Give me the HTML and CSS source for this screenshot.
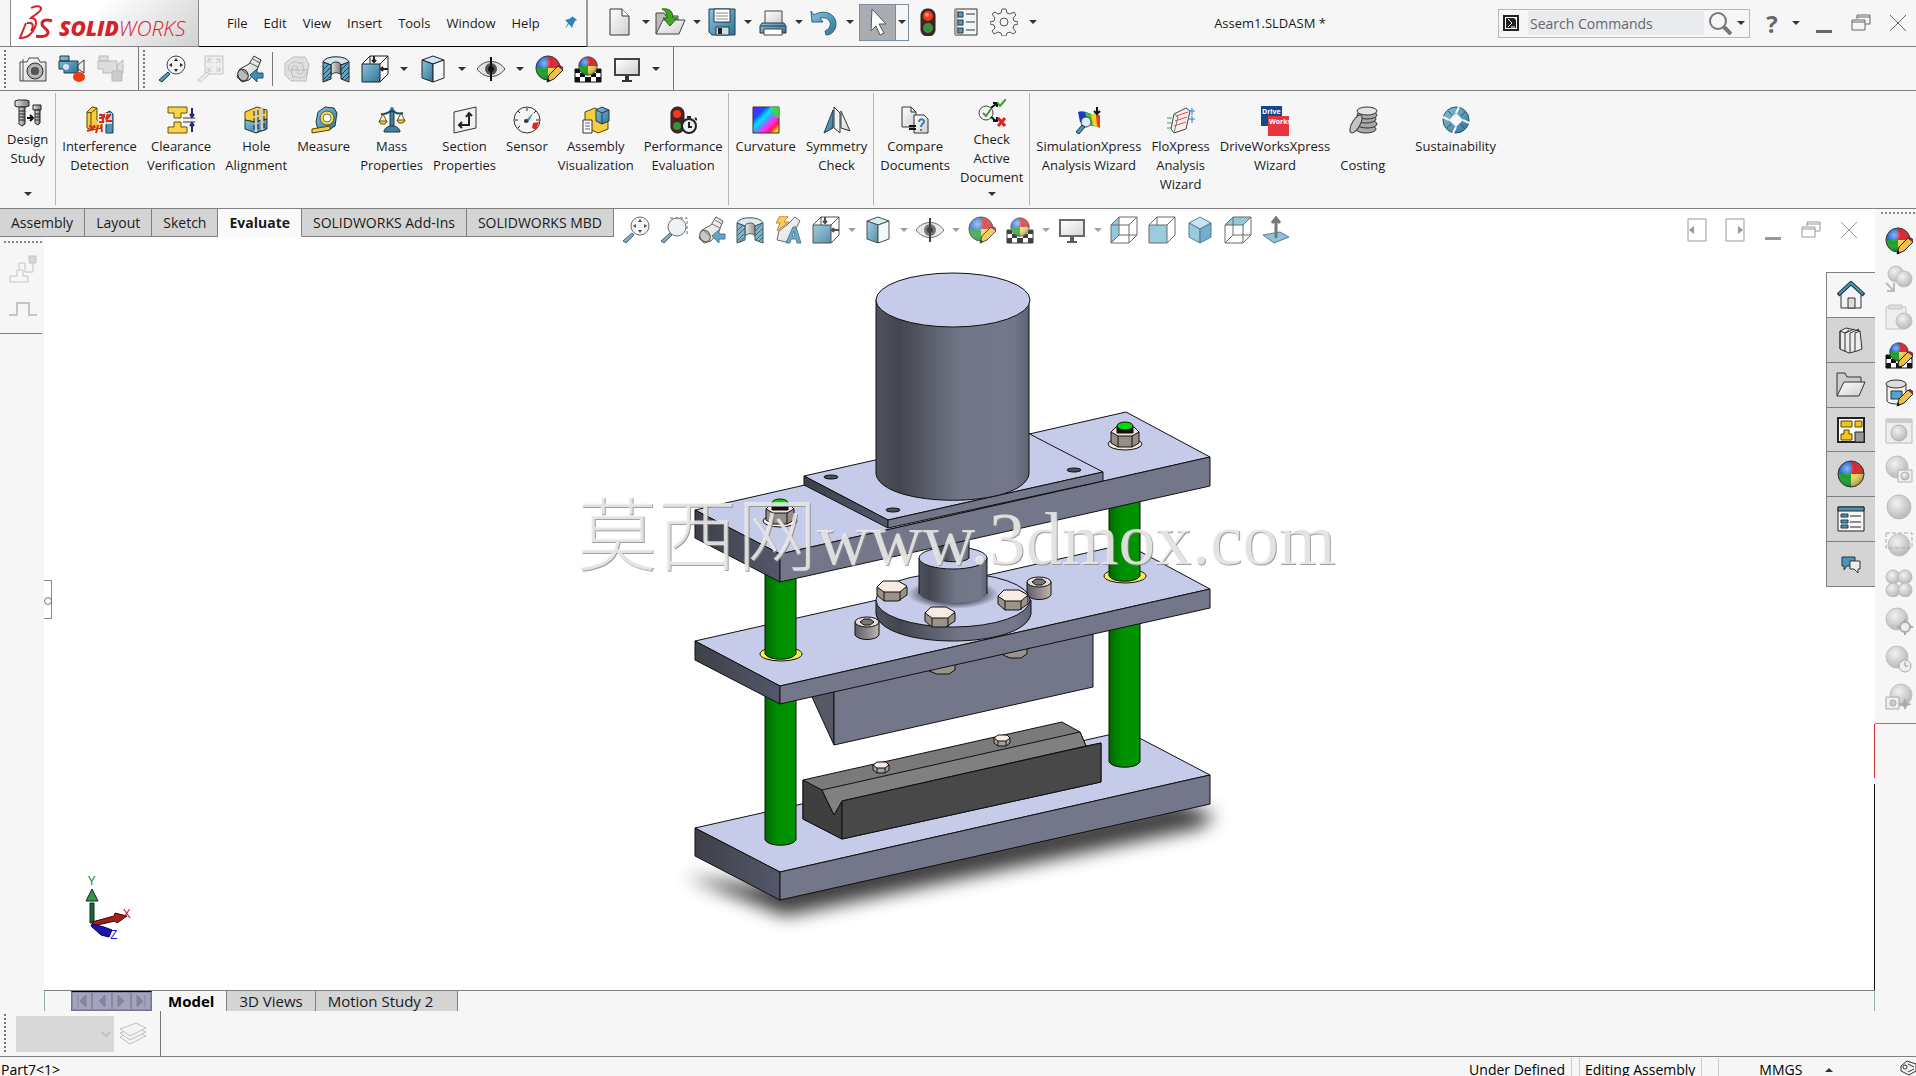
FILE: index.html
```html
<!DOCTYPE html>
<html lang="en">
<head>
    <meta charset="UTF-8">
    <meta name="viewport" content="width=device-width, initial-scale=1.0">
    <title>SOLIDWORKS - Assem1.SLDASM</title>
    <link rel="stylesheet" href="styles.css">
</head>
<body>
    <!-- icon sprite -->
    <svg class="sprite" aria-hidden="true">
        <defs>
            <linearGradient id="blue" x1="0" y1="0" x2="1" y2="1"><stop offset="0" stop-color="#8cc4dc"/><stop offset="1" stop-color="#2f7396"/></linearGradient>
            <linearGradient id="paper" x1="0" y1="0" x2="1" y2="1"><stop offset="0" stop-color="#fff"/><stop offset="1" stop-color="#cfcfcf"/></linearGradient>
            <linearGradient id="metal" x1="0" y1="0" x2="1" y2="0"><stop offset="0" stop-color="#e4e4e4"/><stop offset="1" stop-color="#777"/></linearGradient>
            <linearGradient id="rainbow" x1="0" y1="0" x2="1" y2="1"><stop offset="0" stop-color="#7a10ff"/><stop offset=".25" stop-color="#1550ff"/><stop offset=".4" stop-color="#00e5ff"/><stop offset=".5" stop-color="#40a0ff"/><stop offset=".65" stop-color="#ff30f0"/><stop offset=".8" stop-color="#ff1a50"/><stop offset=".92" stop-color="#ffe600"/><stop offset="1" stop-color="#40e000"/></linearGradient>
            <radialGradient id="shine" cx=".35" cy=".3" r=".75"><stop offset="0" stop-color="#fff" stop-opacity=".5"/><stop offset=".4" stop-color="#fff" stop-opacity="0"/><stop offset="1" stop-color="#000" stop-opacity=".35"/></radialGradient>
            <radialGradient id="grayball" cx=".4" cy=".35" r=".7"><stop offset="0" stop-color="#f2f2f2"/><stop offset="1" stop-color="#b4b4b4"/></radialGradient>
        </defs>

        <symbol id="new" viewBox="0 0 28 28"><path d="M4 1h12l7 7v19H4z" fill="url(#paper)" stroke="#333"/><path d="M16 1v7h7" fill="#fff" stroke="#333"/></symbol>
        <symbol id="open" viewBox="0 0 32 28"><path d="M1 26V5h8l2 3h12v4" fill="#bbb" stroke="#444"/><path d="M1 26l7-14h22l-6 14z" fill="url(#paper)" stroke="#444"/><path d="M7 1c7-1 11 2 11 9h4l-7 8-7-8h4c0-4-1-7-5-9z" fill="#45a520" stroke="#1f6310"/></symbol>
        <symbol id="save" viewBox="0 0 28 28"><path d="M1 1h26v26H4l-3-3z" fill="url(#blue)" stroke="#1d3a4a"/><path d="M6 1h16v13H6z" fill="#fff" stroke="#1d3a4a"/><path d="M8 5h12M8 8h12M8 11h12" stroke="#888"/><path d="M8 19h13v8H8z" fill="#cfdde4" stroke="#1d3a4a"/><path d="M10 20h4v6h-4z" fill="#222"/></symbol>
        <symbol id="print" viewBox="0 0 28 28"><path d="M6 3h17v13H6z" fill="url(#paper)" stroke="#444"/><path d="M3 15h22l2 3v7H1v-7z" fill="url(#blue)" stroke="#1d3a4a"/><path d="M5 21h18v6H5z" fill="#fff" stroke="#444"/><path d="M2 18h24" stroke="#1d3a4a"/></symbol>
        <symbol id="undo" viewBox="0 0 28 28"><path d="M1 3l3 4c9-6 22-2 22 9 0 6-4 11-10 11l-1-4c9-4 6-15-5-13l3 4H2z" fill="url(#blue)" stroke="#2b6384"/></symbol>
        <symbol id="cursor" viewBox="0 0 28 28"><path d="M8 1l14 15h-7l5 9-4 2-4-9-5 5z" fill="#fff" stroke="#555"/></symbol>
        <symbol id="traffic" viewBox="0 0 28 28"><rect x="7" y="1" width="14" height="27" rx="6" fill="#4a2222" stroke="#222"/><circle cx="14" cy="8" r="5" fill="#f23b1d"/><circle cx="14" cy="20" r="5" fill="#35933f"/><circle cx="13" cy="7" r="2" fill="#ff9577"/></symbol>
        <symbol id="list" viewBox="0 0 28 28"><path d="M3 1h22v26H3z" fill="#f4f7f8" stroke="#333"/><path d="M3 1h3v26H3z" fill="#aaa"/><path d="M6 4h5v5H6zM6 12h5v5H6zM6 20h5v5H6z" fill="#5a9cbd" stroke="#234"/><path d="M14 6h9M14 14h9M14 22h9" stroke="#333"/></symbol>
        <symbol id="gear" viewBox="0 0 28 28"><path d="M12 1h4l1 4 3 1 4-2 2 3-3 3 1 3 4 1v2l-4 1-1 3 3 4-3 2-3-2-3 1-1 3h-4l-1-3-3-1-4 2-2-3 3-3-1-3-4-1v-2l4-1 1-3-3-4 3-2 3 2 3-1z" fill="#f4f4f4" stroke="#555"/><circle cx="14" cy="14" r="4" fill="#f7f7f7" stroke="#555"/></symbol>
        <symbol id="camera" viewBox="0 0 28 28"><path d="M1 7h7l2-4h9l2 4h6v19H1z" fill="url(#paper)" stroke="#444"/><path d="M4 4v22" stroke="#555"/><circle cx="16" cy="16" r="8" fill="#aaa" stroke="#333"/><circle cx="16" cy="16" r="5" fill="#555" stroke="#ddd"/></symbol>
        <symbol id="video" viewBox="0 0 28 28"><path d="M2 1h9v5H2zM1 6h19v12H6v-4H1z" fill="url(#blue)" stroke="#1d3a4a"/><circle cx="8" cy="12" r="3" fill="#cfe6f0"/><path d="M20 10l6-5v13l-6-4z" fill="#eee" stroke="#333"/><ellipse cx="21" cy="22" rx="6" ry="5" fill="#ee3c10"/></symbol>
        <symbol id="videostop" viewBox="0 0 28 28"><g fill="#ddd" stroke="#bbb"><path d="M2 1h9v5H2zM1 6h19v12H6v-4H1zM20 10l6-5v13l-6-4z"/><path d="M15 16h10v10H15z" fill="#ccc"/></g></symbol>
        <symbol id="zoomfit" viewBox="0 0 28 28"><path d="M10 17l2 2-8 8-3-2z" fill="url(#blue)" stroke="#234"/><circle cx="18" cy="10" r="9" fill="#f2f6f8" stroke="#444"/><path d="M18 3l2 3h-4zM18 17l2-3h-4zM11 10l3-2v4zM25 10l-3-2v4z" fill="#222"/></symbol>
        <symbol id="zoomarea" viewBox="0 0 28 28"><g fill="#eee" stroke="#c4c4c4"><path d="M8 1h18v18H8z"/><path d="M10 17l2 2-8 8-3-2z"/><path d="M11 8V4h4M19 4h4v4M23 12v4h-4M15 16h-4v-4M11 4l4 4M23 4l-4 4M23 16l-4-4M11 16l4-4" fill="none"/></g></symbol>
        <symbol id="zoomwin" viewBox="0 0 28 28"><path d="M10 2h17v16" fill="none" stroke="#444" stroke-dasharray="3 2"/><path d="M10 17l2 2-8 8-3-2z" fill="url(#blue)" stroke="#234"/><circle cx="17" cy="11" r="9" fill="#e9f0f2" stroke="#444"/></symbol>
        <symbol id="prev" viewBox="0 0 28 28"><path d="M18 1l7 4-4 10-8 10-7 2-5-5 3-8 9-5z" fill="url(#paper)" stroke="#333"/><ellipse cx="7" cy="20" rx="5" ry="6" fill="#bbb" stroke="#333" transform="rotate(-30 7 20)"/><path d="M14 8l8 4M17 4l7 4M6 15l6 5" stroke="#555"/><path d="M14 20l7-6v4h6v5h-6v4z" fill="#3f8fb8" stroke="#1d5270"/></symbol>
        <symbol id="refresh" viewBox="0 0 28 28"><g fill="#e0e0e0" stroke="#bdbdbd"><path d="M2 8l8-6h12l4 7-3 17H8L2 20z"/><path d="M5 15c0-8 8-10 12-6l2-2 2 8h-8l2-3c-4-3-6 0-6 3zM24 15c0 8-8 10-12 6l-2 2-2-8h8l-2 3c4 3 6 0 6-3z"/></g></symbol>
        <symbol id="section" viewBox="0 0 28 28"><path d="M1 7C3 0 25 0 27 7l-8 3c-1-3-9-3-10 0z" fill="#d5e5ec" stroke="#222"/><path d="M9 10c1-4 9-4 10 0v10c-2-3-8-3-10 0z" fill="url(#metal)" stroke="#333"/><path d="M1 7l8 3v14l-8 3zM27 7l-8 3v14l8 3z" fill="#5fa5c6" stroke="#222"/><path d="M1 15l6-6M1 20l8-8M1 25l8-8M3 26l6-5M19 15l6-6M19 20l8-8M20 24l7-7M23 25l4-4" stroke="#153d52"/></symbol>
        <symbol id="viewcube" viewBox="0 0 28 28"><path d="M9 1h18v18M9 1L1 9M27 1l-8 8M27 19l-8 8M9 1v8" fill="none" stroke="#222"/><path d="M1 9h18v18H1z" fill="url(#blue)" stroke="#222"/><path d="M13 1v6M11 5l2 2 2-2M27 14h-7M22 12l-2 2 2 2" fill="none" stroke="#222" stroke-width="2"/></symbol>
        <symbol id="cube" viewBox="0 0 28 28"><path d="M3 5l11-4 11 4-11 4z" fill="#cfe8f2" stroke="#222"/><path d="M3 5l11 4v18L3 23z" fill="url(#blue)" stroke="#222"/><path d="M25 5L14 9v18l11-4z" fill="#f1f7fa" stroke="#222"/></symbol>
        <symbol id="eye" viewBox="0 0 28 28"><path d="M0 14C7 4 21 4 28 14 21 24 7 24 0 14z" fill="#e4e4e4" stroke="#444"/><circle cx="14" cy="14" r="6" fill="#555"/><path d="M14 2v24" stroke="#111" stroke-width="2"/><circle cx="14" cy="14" r="3" fill="#111"/></symbol>
        <symbol id="ball" viewBox="0 0 28 28"><path d="M14 1v13H1A13 13 0 0 1 14 1z" fill="#2568d8"/><path d="M14 1a13 13 0 0 1 13 13H14z" fill="#d8232a"/><path d="M1 14h13v13A13 13 0 0 1 1 14z" fill="#17a024"/><path d="M27 14H14v13a13 13 0 0 0 13-13z" fill="#f0d25a"/><circle cx="14" cy="14" r="13" fill="url(#shine)" stroke="#333" stroke-width="1"/></symbol>
        <symbol id="pencil" viewBox="0 0 28 28"><path d="M12 27l2-7 9-9 5 4-9 9z" fill="#f0c040" stroke="#222"/><path d="M23 11l2-1 3 2v3z" fill="#8a2040"/><path d="M12 27l1-4 2 3z" fill="#111"/></symbol>
        <symbol id="ballpen" viewBox="0 0 28 28"><use href="#ball" width="26" height="26"/><use href="#pencil"/></symbol>
        <symbol id="scene" viewBox="0 0 28 28"><path d="M1 14h26v13H1z" fill="#fff" stroke="#111"/><path d="M1 14h5v4H1zM11 14h6v4h-6zM22 14h5v4h-5zM6 18h5v4H6zM17 18h5v4h-5zM1 22h5v5H1zM11 22h6v5h-6zM22 22h5v5h-5z" fill="#111"/><use href="#ball" x="4" y="0" width="20" height="22"/></symbol>
        <symbol id="scenepen" viewBox="0 0 28 28"><use href="#scene"/><use href="#pencil"/></symbol>
        <symbol id="monitor" viewBox="0 0 28 28"><path d="M1 3h26v18H1z" fill="#444"/><path d="M3 5h22v14H3z" fill="url(#paper)"/><path d="M12 21h4v4h-4zM9 25h10v2H9z" fill="#333"/></symbol>
        <symbol id="annot" viewBox="0 0 28 28"><path d="M21 1l5 4-5 9-9 12-9-2 2-9 8-6z" fill="url(#paper)" stroke="#444"/><path d="M6 0h8l-4 6h5L3 15l3-8H2z" fill="#f5c52c" stroke="#a56c10"/><path d="M12 27l7-16h3l5 16h-4l-1-4h-5l-1 4zM18 20h3l-1-5z" fill="#4d93b8" stroke="#285f80"/></symbol>
        <symbol id="wirebox" viewBox="0 0 28 28"><path d="M1 9h18v18H1zM9 1h18v18H9zM1 9l8-8M19 9l8-8M19 27l8-8M1 27l8-8" fill="none" stroke="#444"/></symbol>
        <symbol id="leftcube" viewBox="0 0 28 28"><path d="M1 9l8-8v18l-8 8z" fill="#7cb9d4"/><use href="#wirebox"/></symbol>
        <symbol id="frontcube" viewBox="0 0 28 28"><path d="M9 1h18v18l-8 8M1 9l8-8M19 9l8-8M9 1v8" fill="none" stroke="#444"/><path d="M1 9h18v18H1z" fill="#83bfd8" stroke="#444"/></symbol>
        <symbol id="topcube" viewBox="0 0 28 28"><path d="M1 9l8-8h18l-8 8z" fill="#7cb9d4"/><use href="#wirebox"/></symbol>
        <symbol id="solidcube" viewBox="0 0 28 28"><path d="M3 7l11-6 11 6-11 6z" fill="#b5e0f0" stroke="#357"/><path d="M3 7l11 6v14L3 21z" fill="#7fbfdc" stroke="#357"/><path d="M25 7l-11 6v14l11-6z" fill="#4f9dc2" stroke="#357"/></symbol>
        <symbol id="normal" viewBox="0 0 28 28"><path d="M1 19l17-3 9 5-15 6z" fill="#74b2d0" stroke="#357"/><path d="M14 22V4M10 7l4-5 4 5" fill="none" stroke="#555" stroke-width="3"/></symbol>

        <symbol id="design" viewBox="0 0 28 28"><g fill="url(#metal)" stroke="#222"><path d="M1 2l3-1h8l3 1v5l-3 1H4L1 7z"/><path d="M5 8h6v17l-3 2-3-2z"/><path d="M19 6h8v5h-8z"/><path d="M21 11h5v13l-2 2-3-2z"/></g><path d="M5 12h6M5 15h6M5 18h6M5 21h6M21 15h5M21 18h5M21 21h5" stroke="#222"/><path d="M13 19h5M16 16l3 3-3 3" fill="none" stroke="#111" stroke-width="2"/></symbol>
        <symbol id="interf" viewBox="0 0 28 28"><path d="M1 6l5-5 5 1v12l5 3v5L6 24l-5-2z" fill="#f7cf3e" stroke="#5a4200"/><path d="M1 6l4 1v16M5 7l6-5" fill="none" stroke="#5a4200"/><path d="M18 8l6-3 3 3v19h-7V16h-4v-5z" fill="#4e94b6" stroke="#1d3a4a"/><path d="M12 7h14v11H12z" fill="#fff" fill-opacity=".7"/><path d="M13 9h5v3M13 12h4v4h-4M20 15h6M22 8l-2 5M25 8l-5 6M14 8l3 3M3 20l5 2M12 19l-2 8M15 19l1 7M1 25l7-2M8 19l1 3" fill="none" stroke="#e02820" stroke-width="2"/></symbol>
        <symbol id="clear" viewBox="0 0 28 28"><path d="M1 1h19v6h-6v5H7V7H1zM7 16h7v5h6v6H1v-6h6z" fill="#f6d54a" stroke="#6e5300"/><path d="M16 12h12M16 16h12" stroke="#333"/><path d="M25 2v9M23 8l2 3 2-3M25 26v-9M23 20l2-3 2 3" fill="none" stroke="#222870" stroke-width="2"/></symbol>
        <symbol id="hole" viewBox="0 0 28 28"><path d="M3 6l12-5 10 3v9L13 16 3 14z" fill="#f7cf3e" stroke="#5a4200"/><path d="M3 14l10 2 12-3v10l-11 4-11-4z" fill="url(#blue)" stroke="#1d3a4a"/><path d="M14 4v22M20 2v22" stroke="#ccc" stroke-width="3"/><path d="M12 5v21M22 3v22M16 4v22" stroke="#222" stroke-dasharray="5 2"/></symbol>
        <symbol id="measure" viewBox="0 0 28 28"><path d="M8 6l7-5 9 1 3 5-2 13-6 4H8L6 16z" fill="url(#blue)" stroke="#1d3a4a"/><circle cx="17" cy="12" r="7" fill="#f7d94e" stroke="#554"/><circle cx="17" cy="12" r="4" fill="#fff" stroke="#776"/><path d="M20 20L2 23v4l18-3z" fill="#f6cf3c" stroke="#5a4200"/></symbol>
        <symbol id="mass" viewBox="0 0 28 28"><path d="M12 4h4v16h-4z" fill="#3f7f9f" stroke="#1d3a4a"/><circle cx="14" cy="3" r="2" fill="#3f7f9f"/><path d="M3 8c7 1 8-3 11-3s4 4 11 2" fill="none" stroke="#1d4a64" stroke-width="2"/><path d="M5 8L1 16h8zM23 7l-4 8h8z" fill="none" stroke="#6a5200"/><path d="M1 15h8l-2 3H3zM19 14h8l-2 3h-4z" fill="#f6cf3c" stroke="#6a5200"/><path d="M6 26c0-4 4-6 8-6s8 2 8 6z" fill="#3f7f9f" stroke="#1d3a4a"/></symbol>
        <symbol id="sectprop" viewBox="0 0 28 28"><path d="M3 6l22-5v21L3 27z" fill="#f2f2f2" stroke="#333"/><path d="M9 19h9V9M11 16l-3 3 3 3M15 11l3-4 3 3" fill="none" stroke="#222" stroke-width="2"/></symbol>
        <symbol id="sensor" viewBox="0 0 28 28"><circle cx="14" cy="14" r="13" fill="#f5f5f5" stroke="#333"/><path d="M14 2v3M2 14h3M5 5l2 2M23 5l-2 2M5 22l2-2M26 14h-3" stroke="#222"/><path d="M12 15l9-9-6 11z" fill="#4e94b6"/><circle cx="13" cy="15" r="2" fill="#333"/><path d="M20 17l6-1-3 8-4-2z" fill="#e02820"/></symbol>
        <symbol id="asmviz" viewBox="0 0 28 28"><path d="M3 6l10-4 4 2v10l9 2v7l-10 4-13-6z" fill="#f6cf3c" stroke="#5a4200"/><path d="M14 4l6-3 7 3v11l-7 3-6-3z" fill="url(#blue)" stroke="#1d3a4a"/><path d="M14 4l6 3 7-3M20 7v11" fill="none" stroke="#1d3a4a"/><path d="M1 14h9v13H1z" fill="#fff" stroke="#333"/><path d="M3 17h5M3 20h5M3 23h5" stroke="#2a6bb0"/></symbol>
        <symbol id="perf" viewBox="0 0 28 28"><rect x="2" y="1" width="13" height="26" rx="6" fill="#4a2222" stroke="#222"/><circle cx="8" cy="8" r="4" fill="#f23b1d"/><circle cx="8" cy="20" r="4" fill="#35933f"/><circle cx="20" cy="20" r="7" fill="#e5f0f5" stroke="#222" stroke-width="2"/><path d="M18 11h4M20 16v5h3M26 12l2 2" fill="none" stroke="#222" stroke-width="2"/></symbol>
        <symbol id="curv" viewBox="0 0 28 28"><path d="M1 1h26v26H1z" fill="url(#rainbow)" stroke="#333"/><path d="M17 1h10v11c-5 0-6-6-10-11z" fill="#38e030" opacity=".8"/></symbol>
        <symbol id="symm" viewBox="0 0 28 28"><path d="M10 4v18L1 27z" fill="url(#blue)" stroke="#1d3a4a"/><path d="M18 5v17l9 3z" fill="url(#paper)" stroke="#333"/><path d="M11 1l6 6v20l-6-5z" fill="#eee" fill-opacity=".7" stroke="#333"/></symbol>
        <symbol id="compare" viewBox="0 0 28 28"><path d="M1 1h9l5 5v15H1z" fill="url(#paper)" stroke="#333"/><path d="M10 1v5h5" fill="none" stroke="#333"/><path d="M13 9h10l4 4v14H13z" fill="url(#paper)" stroke="#333"/><path d="M8 20h7M8 23h7" stroke="#111" stroke-width="2"/><path d="M18 16c0-4 6-3 5 0-1 2-3 2-3 5M20 23v2" fill="none" stroke="#3781a8" stroke-width="2"/></symbol>
        <symbol id="check" viewBox="0 0 28 28"><circle cx="8" cy="14" r="7" fill="#f4f4f4" stroke="#444"/><path d="M5 14l3 3 5-7" fill="none" stroke="#3c9a2c" stroke-width="2"/><path d="M13 9l5-4M15 4l4 0v4M13 18l5 4M19 18v4h-4" fill="none" stroke="#111" stroke-width="2"/><path d="M19 3l3 4 6-7" fill="none" stroke="#3c9a2c" stroke-width="2"/><path d="M20 19l7 8M27 19l-7 8" stroke="#d22" stroke-width="3"/></symbol>
        <symbol id="sim" viewBox="0 0 28 28"><path d="M3 6c7-3 12 4 22 3v13c-6-3-12-2-20-6z" fill="#1c38c8"/><path d="M10 6c4 1 8 3 15 3v13c-4-2-8-3-12-3z" fill="#3fc23a"/><path d="M16 8l9 1v13l-7-3z" fill="#f6d61c"/><path d="M21 9h4v13l-3-2z" fill="#ee3a1c"/><circle cx="11" cy="16" r="5" fill="#d9edf3" stroke="#444"/><path d="M7 19l3 2-6 7-3-2z" fill="#4e94b6" stroke="#234"/><path d="M22 1v7M19 5l3 3 3-3" fill="none" stroke="#111" stroke-width="2"/></symbol>
        <symbol id="flo" viewBox="0 0 28 28"><path d="M7 8l12-6 4 3-4 18-12 4-3-4z" fill="#fbeeee" stroke="#444"/><path d="M9 10l12-4M8 15l12-4M7 20l12-4" stroke="#e05050"/><path d="M7 8l4 3-4 16M0 12h5M0 17h5M0 22h5" fill="none" stroke="#3fa05c"/><path d="M25 2v7M25 10v7M22 5h6M22 13h6" stroke="#2a80d0"/></symbol>
        <symbol id="cost" viewBox="0 0 30 28"><g fill="#a8a8a8" stroke="#333"><ellipse cx="18" cy="23" rx="10" ry="4"/><ellipse cx="19" cy="18" rx="10" ry="4"/><ellipse cx="18" cy="13" rx="10" ry="4"/><ellipse cx="19" cy="9" rx="10" ry="4"/><ellipse cx="19" cy="5" rx="10" ry="4" fill="#e4e4e4"/><ellipse cx="8" cy="18" rx="4" ry="10" transform="rotate(30 8 18)" fill="#c4c4c4"/></g></symbol>
        <symbol id="sustain" viewBox="0 0 28 28"><circle cx="14" cy="14" r="13" fill="url(#blue)" stroke="#234f68"/><path d="M14 7l7 7-7 7-7-7z" fill="#f7f7f7"/><path d="M14 7l3-6M21 14l6 3M14 21l-3 6M7 14l-6-3" stroke="#f7f7f7" stroke-width="2"/><path d="M10 9L6 5M19 10l4-4M19 18l3 4M9 18l-4 4" stroke="#1f5c7c"/></symbol>

        <symbol id="home" viewBox="0 0 28 28"><path d="M4 13v14h20V13L14 4z" fill="#f3f3f3" stroke="#333"/><path d="M11 17h7v10h-7z" fill="#ddd" stroke="#333"/><path d="M1 14L14 2l13 12" fill="none" stroke="#1d3a4a" stroke-width="4"/><path d="M2 13L14 2l12 11" fill="none" stroke="#4e94b6" stroke-width="2"/></symbol>
        <symbol id="books" viewBox="0 0 28 28"><g fill="#ececec" stroke="#333"><path d="M3 5l6-3 14 3 2 18-5 2-8 2-9-4z"/><path d="M3 5l5 2 4-3M8 7v19M8 7l5-2 4-2M13 7v20M13 7l5-2 4-2M18 7v18M18 7l5-2M3 5v18" fill="none"/></g></symbol>
        <symbol id="folder" viewBox="0 0 32 28"><path d="M2 25V2h8l2 4h14v5" fill="#ccc" stroke="#333"/><path d="M2 25l7-14h21l-6 14z" fill="url(#paper)" stroke="#333"/></symbol>
        <symbol id="palette" viewBox="0 0 28 28"><path d="M1 2h26v24H1z" fill="#fff" stroke="#222" stroke-width="2"/><path d="M4 5h11v6H4zM18 5h7v6h-7zM7 14h5v4h3v6H4v-6h3z" fill="#f4c41e" stroke="#5a4200"/><path d="M18 16h9v10h-9z" fill="#999" stroke="#222"/></symbol>
        <symbol id="props" viewBox="0 0 28 28"><path d="M1 2h26v24H1z" fill="#f8f8f8" stroke="#222"/><path d="M1 2h26v4H1z" fill="#4e94b6" stroke="#222"/><path d="M4 9h7v3H4zM4 15h7v3H4zM4 20h7v3H4z" fill="#4e94b6" stroke="#1d3a4a"/><path d="M13 11h11M13 17h11M13 22h11" stroke="#222"/></symbol>
        <symbol id="chat" viewBox="0 0 28 28"><path d="M5 7h13v9h-8l-3 4v-4H5z" fill="#4e94b6" stroke="#1d3a4a"/><path d="M13 11h10v8h-2v4l-4-4h-4z" fill="#eee" stroke="#333"/></symbol>
        <symbol id="db" viewBox="0 0 28 28"><path d="M2 5v17c2 4 17 4 19 0V5" fill="#f3f3f3" stroke="#333"/><ellipse cx="11" cy="5" rx="10" ry="4" fill="#ddd" stroke="#333"/><path d="M6 12h11v8H6z" fill="#4ea4d4" stroke="#333"/><use href="#pencil"/></symbol>

        <symbol id="g-copy" viewBox="0 0 28 28"><g fill="url(#grayball)" stroke="#c2c2c2"><circle cx="11" cy="9" r="8"/><circle cx="19" cy="14" r="8"/></g><path d="M1 18l7 7M9 18v8H2" fill="none" stroke="#bbb" stroke-width="2"/></symbol>
        <symbol id="g-paste" viewBox="0 0 28 28"><path d="M1 4h20v22H1z" fill="#eee" stroke="#c4c4c4"/><path d="M4 2h13v4H4z" fill="#ddd" stroke="#c4c4c4"/><circle cx="19" cy="18" r="8" fill="url(#grayball)" stroke="#c2c2c2"/></symbol>
        <symbol id="g-win" viewBox="0 0 28 28"><path d="M1 2h26v24H1z" fill="#eee" stroke="#bbb"/><path d="M1 2h26v4H1z" fill="#ccc"/><circle cx="14" cy="16" r="8" fill="url(#grayball)" stroke="#b5b5b5"/></symbol>
        <symbol id="g-ballwin" viewBox="0 0 28 28"><circle cx="12" cy="12" r="11" fill="url(#grayball)" stroke="#c2c2c2"/><path d="M13 15h14v12H13z" fill="#eee" stroke="#b5b5b5"/><circle cx="20" cy="21" r="4" fill="url(#grayball)" stroke="#b5b5b5"/></symbol>
        <symbol id="g-ball" viewBox="0 0 28 28"><circle cx="14" cy="14" r="12" fill="url(#grayball)" stroke="#bbb"/></symbol>
        <symbol id="g-region" viewBox="0 0 28 28"><circle cx="14" cy="14" r="11" fill="url(#grayball)" stroke="#c2c2c2"/><path d="M1 2h26v15H1z" fill="none" stroke="#aaa" stroke-dasharray="4 2"/></symbol>
        <symbol id="g-four" viewBox="0 0 28 28"><g fill="url(#grayball)" stroke="#bbb"><circle cx="8" cy="8" r="7"/><circle cx="20" cy="8" r="7"/><circle cx="8" cy="21" r="7"/><circle cx="20" cy="21" r="7"/></g></symbol>
        <symbol id="g-gear" viewBox="0 0 28 28"><circle cx="12" cy="12" r="11" fill="url(#grayball)" stroke="#c2c2c2"/><circle cx="20" cy="20" r="5" fill="#eee" stroke="#aaa" stroke-width="2"/><path d="M20 12v3M20 25v3M12 20h3M25 20h3" stroke="#aaa" stroke-width="2"/></symbol>
        <symbol id="g-clock" viewBox="0 0 28 28"><circle cx="12" cy="12" r="11" fill="url(#grayball)" stroke="#c2c2c2"/><circle cx="20" cy="21" r="6" fill="#eee" stroke="#aaa"/><path d="M20 17v4h3" fill="none" stroke="#999"/></symbol>
        <symbol id="g-star" viewBox="0 0 28 28"><circle cx="16" cy="12" r="11" fill="url(#grayball)" stroke="#c2c2c2"/><path d="M1 14h13v12H1z" fill="#eee" stroke="#aaa"/><circle cx="8" cy="20" r="3" fill="#ccc" stroke="#aaa"/><path d="M20 15l2 5 5 1-5 2-2 4-2-4-4-2 4-1z" fill="#aaa"/></symbol>
        <symbol id="g-steps" viewBox="0 0 28 28"><path d="M1 27h18v-6h-5v-6H8v6H1zM10 14V8h6v9h8V8" fill="none" stroke="#c4c4c4"/><path d="M20 1h7v7h-7z" fill="#d6d6d6" stroke="#c4c4c4"/></symbol>
        <symbol id="g-pulse" viewBox="0 0 28 28"><path d="M0 20h8V8h12v12h8" fill="none" stroke="#c4c4c4" stroke-width="2"/></symbol>
        <symbol id="g-layers" viewBox="0 0 28 28"><g fill="#f2f2f2" stroke="#c2c2c2"><path d="M1 17l16-6 10 5-16 8z"/><path d="M1 13l16-6 10 5-16 8z"/><path d="M1 9l16-6 10 5-16 8z"/></g></symbol>

        <symbol id="w-min" viewBox="0 0 20 20"><path d="M2 17h16v3H2z" fill="currentColor"/></symbol>
        <symbol id="w-restore" viewBox="0 0 20 20"><path d="M6 6V2h13v9h-5M1 7h13v10H1zM1 9h13M6 4h13" fill="none" stroke="currentColor"/></symbol>
        <symbol id="w-close" viewBox="0 0 20 20"><path d="M2 2l16 16M18 2L2 18" stroke="currentColor" fill="none"/></symbol>
        <symbol id="w-left" viewBox="0 0 20 24"><path d="M1 1h18v22H1z" fill="none" stroke="currentColor"/><path d="M7 8v8l-5-4z" fill="currentColor"/></symbol>
        <symbol id="w-right" viewBox="0 0 20 24"><path d="M1 1h18v22H1z" fill="none" stroke="currentColor"/><path d="M13 8v8l5-4z" fill="currentColor"/></symbol>
    </svg>

    <header class="titlebar">
        <div class="logo">
            <svg class="logo-mark" viewBox="0 0 36 36" aria-hidden="true"><path d="M13 3c5-3 11-2 10 1-1 4-7 6-10 9 5 0 6 4 4 9-2 6-8 12-15 11l6-15M9 18h3c4 0 3 5 1 8" fill="none" stroke="#d2232a" stroke-width="2"/><path d="M34 16c-5-2-10-1-10 3s7 5 6 9-8 4-12 3" fill="none" stroke="#d2232a" stroke-width="3"/></svg>
            <span class="logo-text"><b>SOLID</b>WORKS</span>
        </div>
        <nav class="menu">
            <button>File</button>
            <button>Edit</button>
            <button>View</button>
            <button>Insert</button>
            <button>Tools</button>
            <button>Window</button>
            <button>Help</button>
            <button class="pin" aria-label="Pin menu"><svg viewBox="0 0 14 16"><path d="M8 1l5 4-2 1-2 4-1 3-3-4-4 5 3-6-3-3 4-1 3-2z" fill="#2e83b5"/></svg></button>
        </nav>
        <div class="tools quick">
            <button class="tool" aria-label="New"><svg class="icon"><use href="#new"/></svg></button><button class="caret" aria-label="New options"></button>
            <button class="tool" aria-label="Open"><svg class="icon wide"><use href="#open"/></svg></button><button class="caret" aria-label="Open options"></button>
            <button class="tool" aria-label="Save"><svg class="icon"><use href="#save"/></svg></button><button class="caret" aria-label="Save options"></button>
            <button class="tool" aria-label="Print"><svg class="icon"><use href="#print"/></svg></button><button class="caret" aria-label="Print options"></button>
            <button class="tool" aria-label="Undo"><svg class="icon"><use href="#undo"/></svg></button><button class="caret" aria-label="Undo options"></button>
            <span class="select-box">
                <button class="tool" aria-label="Select"><svg class="icon"><use href="#cursor"/></svg></button><button class="caret" aria-label="Select options"></button>
            </span>
            <button class="tool big" aria-label="Rebuild"><svg class="icon"><use href="#traffic"/></svg></button>
            <button class="tool big" aria-label="File properties"><svg class="icon"><use href="#list"/></svg></button>
            <button class="tool big" aria-label="Options"><svg class="icon"><use href="#gear"/></svg></button><button class="caret" aria-label="More options"></button>
        </div>
        <h1 class="doc-title">Assem1.SLDASM *</h1>
        <form class="search">
            <svg class="search-type" viewBox="0 0 16 16" aria-hidden="true"><path d="M1 1h14v14H1z" fill="#fff" stroke="#222" stroke-width="2"/><path d="M3 3h8l2 2v8H3z" fill="#222"/><path d="M5 4l4 4-4 4M8 12h4" fill="none" stroke="#fff"/></svg>
            <input type="text" placeholder="Search Commands" aria-label="Search Commands">
            <button type="button" class="search-go" aria-label="Search"><svg viewBox="0 0 24 24"><circle cx="10" cy="10" r="8" fill="none" stroke="#777" stroke-width="2"/><path d="M16 16l7 7" stroke="#777" stroke-width="4"/></svg></button>
            <button type="button" class="caret" aria-label="Search options"></button>
        </form>
        <button class="help">?</button>
        <button class="caret" aria-label="Help options"></button>
        <div class="window-buttons">
            <button aria-label="Minimize"><svg><use href="#w-min"/></svg></button>
            <button aria-label="Restore"><svg><use href="#w-restore"/></svg></button>
            <button aria-label="Close"><svg><use href="#w-close"/></svg></button>
        </div>
    </header>

    <div class="toolbar">
        <div class="tools group">
            <span class="grip"></span>
            <button class="tool" aria-label="Screen capture"><svg class="icon"><use href="#camera"/></svg></button>
            <button class="tool" aria-label="Record video"><svg class="icon"><use href="#video"/></svg></button>
            <button class="tool" aria-label="Stop video" disabled><svg class="icon"><use href="#videostop"/></svg></button>
        </div>
        <div class="tools group">
            <span class="grip"></span>
            <button class="tool" aria-label="Zoom to fit"><svg class="icon"><use href="#zoomfit"/></svg></button>
            <button class="tool" aria-label="Zoom to area" disabled><svg class="icon"><use href="#zoomarea"/></svg></button>
            <button class="tool" aria-label="Previous view"><svg class="icon"><use href="#prev"/></svg></button>
            <span class="divider"></span>
            <button class="tool" aria-label="Redraw" disabled><svg class="icon"><use href="#refresh"/></svg></button>
            <button class="tool" aria-label="Section view"><svg class="icon"><use href="#section"/></svg></button>
            <button class="tool" aria-label="View orientation"><svg class="icon"><use href="#viewcube"/></svg></button><button class="caret" aria-label="Orientation options"></button>
            <button class="tool" aria-label="Display style"><svg class="icon"><use href="#cube"/></svg></button><button class="caret" aria-label="Display options"></button>
            <button class="tool" aria-label="Hide items"><svg class="icon"><use href="#eye"/></svg></button><button class="caret" aria-label="Hide options"></button>
            <button class="tool" aria-label="Edit appearance"><svg class="icon"><use href="#ballpen"/></svg></button>
            <button class="tool" aria-label="Apply scene"><svg class="icon"><use href="#scene"/></svg></button>
            <button class="tool" aria-label="View settings"><svg class="icon"><use href="#monitor"/></svg></button><button class="caret" aria-label="View settings options"></button>
        </div>
    </div>

    <div class="ribbon">
        <div class="ribbon-group first">
            <button class="command dropdown"><svg class="icon"><use href="#design"/></svg><span>Design<br>Study</span></button>
        </div>
        <div class="ribbon-group">
            <button class="command"><svg class="icon"><use href="#interf"/></svg><span>Interference<br>Detection</span></button>
            <button class="command"><svg class="icon"><use href="#clear"/></svg><span>Clearance<br>Verification</span></button>
            <button class="command"><svg class="icon"><use href="#hole"/></svg><span>Hole<br>Alignment</span></button>
            <button class="command"><svg class="icon"><use href="#measure"/></svg><span>Measure</span></button>
            <button class="command"><svg class="icon"><use href="#mass"/></svg><span>Mass<br>Properties</span></button>
            <button class="command"><svg class="icon"><use href="#sectprop"/></svg><span>Section<br>Properties</span></button>
            <button class="command"><svg class="icon"><use href="#sensor"/></svg><span>Sensor</span></button>
            <button class="command"><svg class="icon"><use href="#asmviz"/></svg><span>Assembly<br>Visualization</span></button>
            <button class="command"><svg class="icon"><use href="#perf"/></svg><span>Performance<br>Evaluation</span></button>
        </div>
        <div class="ribbon-group">
            <button class="command"><svg class="icon"><use href="#curv"/></svg><span>Curvature</span></button>
            <button class="command"><svg class="icon"><use href="#symm"/></svg><span>Symmetry<br>Check</span></button>
        </div>
        <div class="ribbon-group">
            <button class="command"><svg class="icon"><use href="#compare"/></svg><span>Compare<br>Documents</span></button>
            <button class="command dropdown"><svg class="icon"><use href="#check"/></svg><span>Check<br>Active<br>Document</span></button>
        </div>
        <div class="ribbon-group">
            <button class="command"><svg class="icon"><use href="#sim"/></svg><span>SimulationXpress<br>Analysis Wizard</span></button>
            <button class="command"><svg class="icon"><use href="#flo"/></svg><span>FloXpress<br>Analysis<br>Wizard</span></button>
            <button class="command"><svg class="icon tall" viewBox="0 0 28 30"><path d="M0 0h21v20H0z" fill="#14478c"/><path d="M7 10h21v20H7z" fill="#e8343c"/><text class="drive-text" x="1" y="8">Drive</text><text class="drive-text" x="8" y="18">Works</text></svg><span>DriveWorksXpress<br>Wizard</span></button>
            <button class="command"><svg class="icon wide"><use href="#cost"/></svg><span><br>Costing</span></button>
            <button class="command spaced"><svg class="icon"><use href="#sustain"/></svg><span>Sustainability</span></button>
        </div>
    </div>

    <main class="main">
        <div class="workspace">
            <div class="top-row">
                <div class="tabs">
                    <button>Assembly</button>
                    <button>Layout</button>
                    <button>Sketch</button>
                    <button class="active">Evaluate</button>
                    <button>SOLIDWORKS Add-Ins</button>
                    <button>SOLIDWORKS MBD</button>
                </div>
                <div class="tools heads-up">
                    <button class="tool" aria-label="Zoom to fit"><svg class="icon"><use href="#zoomfit"/></svg></button>
                    <button class="tool" aria-label="Zoom to area"><svg class="icon"><use href="#zoomwin"/></svg></button>
                    <button class="tool" aria-label="Previous view"><svg class="icon"><use href="#prev"/></svg></button>
                    <button class="tool" aria-label="Section view"><svg class="icon"><use href="#section"/></svg></button>
                    <button class="tool" aria-label="Dynamic annotation views"><svg class="icon"><use href="#annot"/></svg></button>
                    <button class="tool" aria-label="View orientation"><svg class="icon"><use href="#viewcube"/></svg></button><button class="caret" aria-label="Orientation options"></button>
                    <button class="tool" aria-label="Display style"><svg class="icon"><use href="#cube"/></svg></button><button class="caret" aria-label="Display options"></button>
                    <button class="tool" aria-label="Hide items"><svg class="icon"><use href="#eye"/></svg></button><button class="caret" aria-label="Hide options"></button>
                    <button class="tool" aria-label="Edit appearance"><svg class="icon"><use href="#ballpen"/></svg></button>
                    <button class="tool" aria-label="Apply scene"><svg class="icon"><use href="#scene"/></svg></button><button class="caret" aria-label="Scene options"></button>
                    <button class="tool" aria-label="View settings"><svg class="icon"><use href="#monitor"/></svg></button><button class="caret" aria-label="View settings options"></button>
                    <button class="tool" aria-label="Left"><svg class="icon"><use href="#leftcube"/></svg></button>
                    <button class="tool" aria-label="Front"><svg class="icon"><use href="#frontcube"/></svg></button>
                    <button class="tool" aria-label="Isometric"><svg class="icon"><use href="#solidcube"/></svg></button>
                    <button class="tool" aria-label="Top"><svg class="icon"><use href="#topcube"/></svg></button>
                    <button class="tool" aria-label="Normal to"><svg class="icon"><use href="#normal"/></svg></button>
                </div>
                <div class="window-buttons doc-buttons">
                    <button aria-label="Dock left"><svg><use href="#w-left"/></svg></button>
                    <button aria-label="Dock right"><svg><use href="#w-right"/></svg></button>
                    <button aria-label="Minimize document"><svg><use href="#w-min"/></svg></button>
                    <button aria-label="Restore document"><svg><use href="#w-restore"/></svg></button>
                    <button aria-label="Close document"><svg><use href="#w-close"/></svg></button>
                </div>
            </div>

            <div class="work-body">
                <aside class="left-bar">
                    <div class="left-tools">
                        <span class="grip-h"></span>
                        <button aria-label="Exploded view" disabled><svg class="icon"><use href="#g-steps"/></svg></button>
                        <button aria-label="Explode line sketch" disabled><svg class="icon"><use href="#g-pulse"/></svg></button>
                    </div>
                </aside>

                <section class="canvas">
                    <button class="tree-handle" aria-label="Show tree"></button>

                    <svg class="model" viewBox="560 262 800 704" role="img" aria-label="Press assembly">
                        <defs>
                            <linearGradient id="steel" x1="0" y1="0" x2="1" y2="0"><stop offset="0" stop-color="#50535f"/><stop offset=".15" stop-color="#43464f"/><stop offset=".55" stop-color="#737687"/><stop offset=".9" stop-color="#74778a"/><stop offset="1" stop-color="#5f6272"/></linearGradient>
                            <linearGradient id="green" x1="0" y1="0" x2="1" y2="0"><stop offset="0" stop-color="#006800"/><stop offset=".4" stop-color="#008f00"/><stop offset="1" stop-color="#009400"/></linearGradient>
                            <linearGradient id="end" x1="0" y1="0" x2="1" y2="0"><stop offset="0" stop-color="#3d4048"/><stop offset="1" stop-color="#54576a"/></linearGradient>
                            <linearGradient id="side" x1="0" y1="0" x2="1" y2="0"><stop offset="0" stop-color="#5a5c69"/><stop offset="1" stop-color="#c1b4ac"/></linearGradient>
                            <radialGradient id="fillet"><stop offset=".6" stop-color="#565969"/><stop offset="1" stop-color="#c6cbea"/></radialGradient>
                            <filter id="soft" x="-20%" y="-40%" width="140%" height="180%"><feGaussianBlur stdDeviation="9"/></filter>
                            <g id="bolt" class="edge"><path d="M-15-3v8l7 6h14l9-6v-8z" fill="#9b938a"/><path d="M-15-3l6-6h15l9 5-7 6H-8z" fill="#f7ebe2"/><path d="M-8 2v9M8 2v9"/></g>
                            <g id="socket" class="edge"><path d="M-12-6v13c3 6 21 6 24 0V-6z" fill="url(#side)"/><ellipse cy="-6" rx="12" ry="5" fill="#e8ddd5"/><path d="M-7-6l4-3h6l4 3-4 3h-6z" fill="#777"/></g>
                            <g id="nut" class="edge"><ellipse cy="6" rx="17" ry="6" fill="#f4e8e0"/><path d="M-14-6l5-3H9l5 3V5L7 9H-7l-7-4z" fill="#958d86"/><path d="M-7-3V9M7-3V9"/><path d="M-14-6l5-5H9l5 5-7 4H-7z" fill="#efe4dc"/><path d="M-8-12V-5H8v-7z" fill="#111"/><ellipse cy="-12" rx="8" ry="4" fill="#00d800"/></g>
                            <g id="small-bolt" class="edge"><path d="M-8-2v5l4 3h8l4-3v-5z" fill="#aaa098"/><path d="M-8-2l4-3h9l3 3-4 3h-8z" fill="#f7ebe2"/><path d="M-4 1v5M4 1v5"/></g>
                        </defs>

                        <path d="M685 876l100 40 415-88 16-12-40-15-420 84z" fill="#000" opacity=".75" filter="url(#soft)"/>

                        <!-- base plate -->
                        <g class="edge">
                            <path d="M695 828l431-97 84 44-430 97z" class="face-top"/>
                            <path d="M695 828l85 44v28l-85-44z" fill="url(#end)"/>
                            <path d="M780 872l430-97v29L780 900z" class="face-front"/>
                        </g>

                        <!-- lower die -->
                        <g class="edge">
                            <path d="M803 780l259-58 18 10 6 14 15-3v39L842 839l-39-20z" fill="#7a7a7a"/>
                            <path d="M803 780l19 10 12 25 8-14v38l-39-20z" fill="#3f3f3f"/>
                            <path d="M822 790l258-58 6 14-244 55-8 14z" fill="#808080"/>
                            <path d="M842 801l259-58v39L842 839z" fill="#484848"/>
                        </g>
                        <use href="#small-bolt" x="881" y="767"/>
                        <use href="#small-bolt" x="1002" y="740"/>

                        <!-- lower part of the columns -->
                        <g class="edge" fill="url(#green)">
                            <path d="M765 680v160c4 7 27 7 31 0V680z"/>
                            <path d="M1109 600v162c4 7 27 7 31 0V600z"/>
                        </g>

                        <!-- punch -->
                        <g class="edge">
                            <path d="M812 697l22-20v68z" fill="#555865"/>
                            <path d="M834 680l259-60v67L834 745z" class="face-front"/>
                            <path d="M929 665v6l8 3h12l6-4v-8zM1003 649v6l7 3h11l6-4v-8z" fill="#9b938a"/>
                        </g>

                        <!-- moving plate -->
                        <g class="edge">
                            <path d="M695 641l431-97 84 45-430 97z" class="face-top"/>
                            <path d="M695 641l85 45v18l-85-44z" fill="url(#end)"/>
                            <path d="M780 686l430-97v19L780 704z" class="face-front"/>
                            <ellipse cx="781" cy="654" rx="21" ry="7" fill="#f4ee55"/>
                            <ellipse cx="1125" cy="576" rx="21" ry="7" fill="#f4ee55"/>
                        </g>

                        <!-- upper part of the columns -->
                        <g class="edge" fill="url(#green)">
                            <path d="M765 560v94c4 7 27 7 31 0v-94z"/>
                            <path d="M1109 480v96c4 7 27 7 31 0v-96z"/>
                        </g>

                        <!-- flange and hub -->
                        <use href="#socket" x="1039" y="588"/>
                        <g class="edge">
                            <path d="M876 600v14c6 36 148 36 155 0v-14z" fill="url(#steel)"/>
                            <ellipse cx="953" cy="600" rx="77" ry="27" class="face-top"/>
                        </g>
                        <ellipse cx="953" cy="594" rx="46" ry="15" fill="url(#fillet)"/>
                        <path d="M919 558v36c8 12 60 12 68 0v-36z" fill="url(#steel)"/>
                        <g class="edge">
                            <path d="M919 558v36M987 558v36" />
                            <ellipse cx="953" cy="558" rx="34" ry="11" class="face-top"/>
                            <path d="M938 530v28c3 5 28 5 31 0v-28z" fill="url(#steel)"/>
                        </g>
                        <use href="#bolt" x="892" y="590"/>
                        <use href="#bolt" x="1013" y="599"/>
                        <use href="#bolt" x="940" y="616"/>
                        <use href="#socket" x="867" y="628"/>

                        <!-- top plate -->
                        <g class="edge">
                            <path d="M695 510l431-98 84 45-430 97z" class="face-top"/>
                            <path d="M695 510l85 44v28l-85-44z" fill="url(#end)"/>
                            <path d="M780 554l430-97v29L780 582z" class="face-front"/>
                        </g>
                        <use href="#nut" x="780" y="515"/>
                        <use href="#nut" x="1125" y="438"/>

                        <!-- motor plate and motor -->
                        <g class="edge">
                            <path d="M804 476l214-48 85 44-215 48z" class="face-top"/>
                            <path d="M804 476l84 44v8l-84-43z" fill="url(#end)"/>
                            <path d="M888 520l215-48v9l-215 47z" class="face-front"/>
                            <g fill="#4d505c">
                                <ellipse cx="831" cy="477" rx="7" ry="2"/>
                                <ellipse cx="893" cy="510" rx="7" ry="2"/>
                                <ellipse cx="1074" cy="470" rx="7" ry="2"/>
                            </g>
                            <path d="M876 300v174c6 35 148 35 153 0V300z" fill="url(#steel)"/>
                            <ellipse cx="953" cy="300" rx="77" ry="27" class="face-top"/>
                        </g>

                        <text class="watermark" x="577" y="564"><tspan class="watermark-cjk">莫西网</tspan>www.3dmox.com</text>
                    </svg>

                    <svg class="triad" viewBox="0 0 60 80" role="img" aria-label="Axes">
                        <path d="M16 58h4V38h-4z" fill="#1d6b2a" stroke="#123"/><path d="M12 36l6-12 6 12z" fill="#2c9c3c" stroke="#123"/>
                        <path d="M18 57l22-6 1-3 12 3-10 7-2-2-22 5z" fill="#a51f1f" stroke="#400"/>
                        <path d="M18 59l12 3 8 3-3 7-8-2-10-9z" fill="#1818b0" stroke="#005"/>
                        <text x="14" y="20" fill="#2a7a35">Y</text><text x="49" y="53" fill="#c03">X</text><text x="36" y="74" fill="#1818b0">Z</text>
                    </svg>

                    <nav class="task-pane">
                        <button class="active" aria-label="Resources"><svg class="icon"><use href="#home"/></svg></button>
                        <button aria-label="Design library"><svg class="icon"><use href="#books"/></svg></button>
                        <button aria-label="File explorer"><svg class="icon wide"><use href="#folder"/></svg></button>
                        <button aria-label="View palette"><svg class="icon"><use href="#palette"/></svg></button>
                        <button aria-label="Appearances"><svg class="icon"><use href="#ball"/></svg></button>
                        <button aria-label="Custom properties"><svg class="icon"><use href="#props"/></svg></button>
                        <button aria-label="Forum"><svg class="icon"><use href="#chat"/></svg></button>
                    </nav>
                </section>
            </div>

            <div class="sheet-tabs">
                <div class="sheet-nav">
                    <button aria-label="First tab"><svg viewBox="0 0 12 12"><path d="M2 0v12M10 0L4 6l6 6z"/></svg></button>
                    <button aria-label="Previous tab"><svg viewBox="0 0 12 12"><path d="M9 0L3 6l6 6z"/></svg></button>
                    <button aria-label="Next tab"><svg viewBox="0 0 12 12"><path d="M3 0l6 6-6 6z"/></svg></button>
                    <button aria-label="Last tab"><svg viewBox="0 0 12 12"><path d="M10 0v12M2 0l6 6-6 6z"/></svg></button>
                </div>
                <button class="sheet active">Model</button>
                <button class="sheet">3D Views</button>
                <button class="sheet last">Motion Study 2</button>
            </div>
        </div>

        <aside class="right-bar">
            <div class="right-tools">
                <span class="grip-h"></span>
                <button aria-label="Edit appearance"><svg class="icon"><use href="#ballpen"/></svg></button>
                <button aria-label="Copy appearance" disabled><svg class="icon"><use href="#g-copy"/></svg></button>
                <button aria-label="Paste appearance" disabled><svg class="icon"><use href="#g-paste"/></svg></button>
                <button aria-label="Edit scene"><svg class="icon"><use href="#scenepen"/></svg></button>
                <button aria-label="Edit decal"><svg class="icon"><use href="#db"/></svg></button>
                <button aria-label="Integrated preview" disabled><svg class="icon"><use href="#g-win"/></svg></button>
                <button aria-label="Preview window" disabled><svg class="icon"><use href="#g-ballwin"/></svg></button>
                <button aria-label="Final render" disabled><svg class="icon"><use href="#g-ball"/></svg></button>
                <button aria-label="Render region" disabled><svg class="icon"><use href="#g-region"/></svg></button>
                <button aria-label="Proof sheet" disabled><svg class="icon"><use href="#g-four"/></svg></button>
                <button aria-label="Render options" disabled><svg class="icon"><use href="#g-gear"/></svg></button>
                <button aria-label="Schedule render" disabled><svg class="icon"><use href="#g-clock"/></svg></button>
                <button aria-label="Recall render" disabled><svg class="icon"><use href="#g-star"/></svg></button>
            </div>
        </aside>
    </main>

    <div class="layer-bar">
        <span class="grip"></span>
        <select aria-label="Layer" disabled><option></option></select>
        <button aria-label="Layer properties" disabled><svg class="icon"><use href="#g-layers"/></svg></button>
    </div>

    <footer class="status">
        <span>Part7&lt;1&gt;</span>
        <span class="status-item push">Under Defined</span>
        <span class="status-item both">Editing Assembly</span>
        <button class="status-item units">MMGS <span class="up"></span></button>
        <button class="tag" aria-label="Tags"><svg viewBox="0 0 16 16"><path d="M1 6l6-5 9 3v7l-7 4-8-4z" fill="#f2f2f2" stroke="#333"/><circle cx="5" cy="7" r="2" fill="#fff" stroke="#333"/><path d="M8 4l6 3M8 12l6-3" stroke="#333"/></svg></button>
    </footer>
</body>
</html>
```
FILE: styles.css
```css
* {
    box-sizing: border-box;
}
body {
    margin: 0;
    height: 100vh;
    display: flex;
    flex-direction: column;
    overflow: hidden;
    background-color: #f6f6f6;
    color: #1a1a1a;
    font-family: 'Open Sans', 'Noto Sans', sans-serif;
    font-size: 14px;
    line-height: 19px;
}
button {
    margin: 0;
    padding: 0;
    border: none;
    background: none;
    color: inherit;
    font: inherit;
    flex: none;
}
.sprite {
    position: absolute;
    width: 0;
    height: 0;
}
.icon {
    display: block;
    width: 28px;
    height: 28px;
}
.icon.wide {
    width: 32px;
}
.icon.tall {
    height: 30px;
    overflow: visible;
}
.drive-text {
    font-family: 'Open Sans', sans-serif;
    font-size: 7px;
    font-weight: bold;
    fill: #fff;
}

/* shared tool buttons */
.tools {
    display: flex;
    align-items: center;
    flex: none;
}
.tool {
    display: flex;
    justify-content: center;
    align-items: center;
}
.caret {
    width: 19px;
    height: 28px;
    display: flex;
    justify-content: center;
    align-items: center;
}
.caret::after,
.dropdown::after {
    content: '';
    border: 4px solid transparent;
    border-top-color: #333;
    border-bottom: none;
}
.grip {
    align-self: stretch;
    width: 2px;
    margin: 3px 7px 2px 4px;
    background: repeating-linear-gradient(#777 0 2px, transparent 2px 4px);
}
.grip-h {
    height: 2px;
    align-self: stretch;
    background: repeating-linear-gradient(90deg, #888 0 2px, transparent 2px 4px);
}

/* title bar */
.titlebar {
    flex: none;
    height: 47px;
    display: flex;
    align-items: center;
    border-bottom: 1px solid #808080;
}
.logo {
    flex: none;
    align-self: stretch;
    width: 189px;
    margin-left: 10px;
    padding-left: 7px;
    display: flex;
    border: solid #8a8a8a;
    border-width: 0 1px;
    background: linear-gradient(135deg, #fff 40%, #d2d2d2);
}
.logo-mark {
    flex: none;
    width: 36px;
    height: 36px;
    margin: 5px 5px 0 0;
}
.logo-text {
    margin-top: 16px;
    color: #d2232a;
    font-size: 21px;
    font-style: italic;
    font-weight: 300;
    line-height: 24px;
}
.logo-text b {
    font-weight: 800;
}
.menu {
    flex: none;
    align-self: stretch;
    display: flex;
    align-items: center;
    gap: 16px;
    width: 389px;
    margin-bottom: -1px;
    padding-left: 28px;
    border-bottom: 1px solid #000;
    border-right: 2px solid #999;
    font-size: 13px;
}
.pin {
    margin-left: 8px;
}
.pin svg {
    display: block;
    width: 14px;
    height: 16px;
}
.quick {
    padding-left: 16px;
    padding-bottom: 2px;
}
.quick .tool {
    width: 32px;
}
.quick .tool.big {
    width: 38px;
}
.select-box {
    display: flex;
    width: 50px;
    height: 37px;
    border: 1px solid #7d8ea0;
}
.quick .select-box .tool {
    width: 36px;
    background-color: #a9adb2;
    border-right: 1px solid #7d8ea0;
}
.select-box .caret {
    width: 12px;
    height: 35px;
}
.doc-title {
    flex: 1;
    margin: 0;
    text-align: center;
    font-size: 13px;
    font-weight: normal;
}
.search {
    flex: none;
    width: 252px;
    height: 29px;
    display: flex;
    align-items: center;
    border: 1px solid #b8b8b8;
}
.search-type {
    width: 16px;
    height: 16px;
    margin: 0 9px 0 4px;
}
.search input {
    flex: 1;
    min-width: 0;
    height: 24px;
    padding: 0 2px;
    border: none;
    background-color: #eaebef;
    font: inherit;
}
.search input::placeholder {
    color: #666;
    opacity: 1;
}
.search-go {
    margin-left: 4px;
}
.search-go svg {
    display: block;
    width: 24px;
    height: 24px;
}
.search .caret {
    width: 17px;
}
.help {
    width: 28px;
    margin-left: 8px;
    color: #666;
    font-size: 24px;
    font-weight: bold;
}
.window-buttons {
    flex: none;
    display: flex;
    color: #666;
}
.window-buttons button {
    width: 37px;
    display: flex;
    justify-content: center;
}
.window-buttons svg {
    width: 20px;
    height: 20px;
}

/* view toolbar */
.toolbar {
    flex: none;
    height: 44px;
    display: flex;
    border-bottom: 1px solid #808080;
}
.group {
    padding-right: 8px;
    border-right: 1px solid #777;
}
.group .tool {
    width: 39px;
    height: 40px;
}
.divider {
    width: 1px;
    height: 34px;
    margin: 0 4px 0 3px;
    background-color: #777;
}

/* command ribbon */
.ribbon {
    flex: none;
    height: 118px;
    display: flex;
    border-bottom: 1px solid #808080;
    font-size: 13px;
}
.ribbon-group {
    display: flex;
    flex: none;
    margin: 2px 0 3px;
    padding: 0 1px;
    border-right: 1px solid #b5b5b5;
}
.ribbon-group:last-child {
    border-right: none;
}
.ribbon-group.first {
    padding: 0 2px;
}
.command {
    display: flex;
    flex-direction: column;
    align-items: center;
    padding: 13px 5px 0;
    text-align: center;
}
.command .icon {
    margin-bottom: 3px;
}
.command .icon.tall {
    margin-bottom: 1px;
}
.command.spaced {
    margin-left: 20px;
}
.command.dropdown {
    padding-top: 6px;
    padding-bottom: 9px;
}
.dropdown::after {
    margin-top: auto;
}

/* workspace */
.main {
    flex: 1;
    min-height: 0;
    display: flex;
}
.workspace {
    flex: 1;
    min-width: 0;
    display: flex;
    flex-direction: column;
}
.top-row {
    flex: none;
    height: 28px;
    display: flex;
    background-color: #fff;
}
.tabs {
    display: flex;
    flex: none;
}
.tabs button {
    padding: 0 11px;
    border: solid #808080;
    border-width: 0 1px 1px 0;
    background-color: #d4d4d4;
}
.tabs .active {
    background-color: #fafafa;
    border-bottom-color: #fafafa;
    font-weight: bold;
}
.heads-up {
    position: relative;
    z-index: 1;
    height: 42px;
    padding-left: 3px;
    opacity: .8;
}
.heads-up .tool {
    width: 38px;
}
.heads-up .caret {
    width: 14px;
}
.heads-up .caret::after {
    border-top-color: #888;
}
.doc-buttons {
    position: relative;
    z-index: 1;
    height: 42px;
    margin-left: auto;
    padding-right: 7px;
    align-items: center;
    color: #999;
}
.doc-buttons button {
    width: 38px;
}
.doc-buttons svg {
    height: 24px;
}
.work-body {
    flex: 1;
    min-height: 0;
    display: flex;
}
.left-bar {
    flex: none;
    width: 44px;
}
.left-tools {
    height: 97px;
    margin-right: 2px;
    padding: 4px 0 0 4px;
    display: flex;
    flex-direction: column;
    align-items: center;
    gap: 12px;
    border-bottom: 1px solid #808080;
}
.canvas {
    position: relative;
    flex: 1;
    min-width: 0;
    display: flex;
    justify-content: center;
    align-items: center;
    background-color: #fff;
    border-bottom: 1px solid #808080;
}
.canvas::before,
.canvas::after {
    content: '';
    position: absolute;
    right: 0;
    width: 1px;
}
.canvas::before {
    bottom: 212px;
    height: 54px;
    background-color: #c33;
}
.canvas::after {
    bottom: 0;
    height: 206px;
    background-color: #111;
}
.tree-handle {
    position: absolute;
    left: 0;
    top: 343px;
    width: 8px;
    height: 39px;
    border: 1px solid #888;
    border-left: none;
}
.tree-handle::after {
    content: '';
    position: absolute;
    left: 0;
    top: 16px;
    width: 6px;
    height: 6px;
    border: 1px solid #777;
    border-radius: 50%;
}
.model {
    width: 800px;
    height: 704px;
    flex: none;
}
.edge {
    stroke: #111;
    stroke-width: 1px;
    stroke-linejoin: round;
}
.face-top {
    fill: #c6cbea;
}
.face-front {
    fill: #747789;
}
.watermark {
    font-family: 'Liberation Serif', 'Noto Sans CJK SC', serif;
    font-size: 73px;
    fill: #f4f4f2;
    fill-opacity: .8;
    filter: drop-shadow(1px 1px 0 #888);
}
.watermark-cjk {
    font-family: 'Noto Sans CJK SC', sans-serif;
    font-size: 80px;
    font-weight: 300;
}
.triad {
    position: absolute;
    left: 30px;
    bottom: 45px;
    width: 60px;
    height: 80px;
}
.triad text {
    font-family: 'Open Sans', sans-serif;
    font-size: 13px;
}
.task-pane {
    position: absolute;
    right: 0;
    top: 35px;
    width: 49px;
    height: 315px;
    display: flex;
    flex-direction: column;
    border: solid #808080;
    border-width: 1px 0 0 1px;
}
.task-pane button {
    flex: 1;
    display: flex;
    justify-content: center;
    align-items: center;
    background-color: #d4d4d4;
    border-bottom: 1px solid #808080;
}
.task-pane .active {
    background-color: #f6f6f6;
}

/* sheet tabs */
.sheet-tabs {
    flex: none;
    height: 20px;
    display: flex;
    margin-left: 44px;
    padding-left: 26px;
    border: solid #9aa;
    border-width: 0 1px;
}
.sheet-nav {
    display: flex;
    width: 81px;
    border: 1px solid #77778c;
    border-top-color: #000;
    background-color: #a3a3bd;
}
.sheet-nav button {
    flex: 1;
    border: 1px solid #8888a0;
}
.sheet-nav svg {
    display: block;
    width: 12px;
    height: 12px;
    margin: auto;
    fill: #8484a0;
    stroke: #8484a0;
}
.sheet {
    padding: 0 12px;
    border-right: 1px solid #808080;
    background-color: #d4d4d4;
    font-size: 15px;
}
.sheet.active {
    padding: 0 12px 0 16px;
    background: none;
    color: #000;
    font-weight: bold;
}
.sheet.last {
    padding-right: 24px;
}

.right-bar {
    flex: none;
    width: 41px;
}
.right-tools {
    display: flex;
    flex-direction: column;
    align-items: flex-end;
    padding: 3px 3px 7px 6px;
    border-bottom: 1px solid #808080;
}
.right-tools .grip-h {
    margin: 0 -3px 8px 0;
}
.right-tools button {
    padding: 5px 0;
}

/* bottom bars */
.layer-bar {
    flex: none;
    height: 46px;
    display: flex;
    align-items: center;
    border-bottom: 1px solid #808080;
}
.layer-bar select {
    width: 98px;
    height: 36px;
    margin: 0 5px 0 3px;
    border: none;
    background-color: #ccc;
    color: #aaa;
}
.layer-bar button {
    align-self: stretch;
    padding: 0 13px 0 0;
    border-right: 1px solid #777;
}
.status {
    flex: none;
    height: 19px;
    display: flex;
    padding: 3px 0 0 1px;
    line-height: 20px;
    color: #000;
    white-space: nowrap;
}
.status-item {
    margin-top: -2px;
    padding: 2px 6px 0 5px;
    border-right: 1px solid #ccc;
}
.push {
    margin-left: auto;
}
.both {
    margin-left: 7px;
    border-left: 1px solid #ccc;
}
.units {
    margin-left: 16px;
    padding: 2px 0 0 40px;
    border-left: 1px solid #ccc;
    border-right: none;
}
.up {
    display: inline-block;
    margin: 0 0 3px 19px;
    border: 4px solid transparent;
    border-bottom-color: #333;
    border-top: none;
}
.tag {
    margin-left: 67px;
}
.tag svg {
    display: block;
    width: 16px;
    height: 16px;
}
```
